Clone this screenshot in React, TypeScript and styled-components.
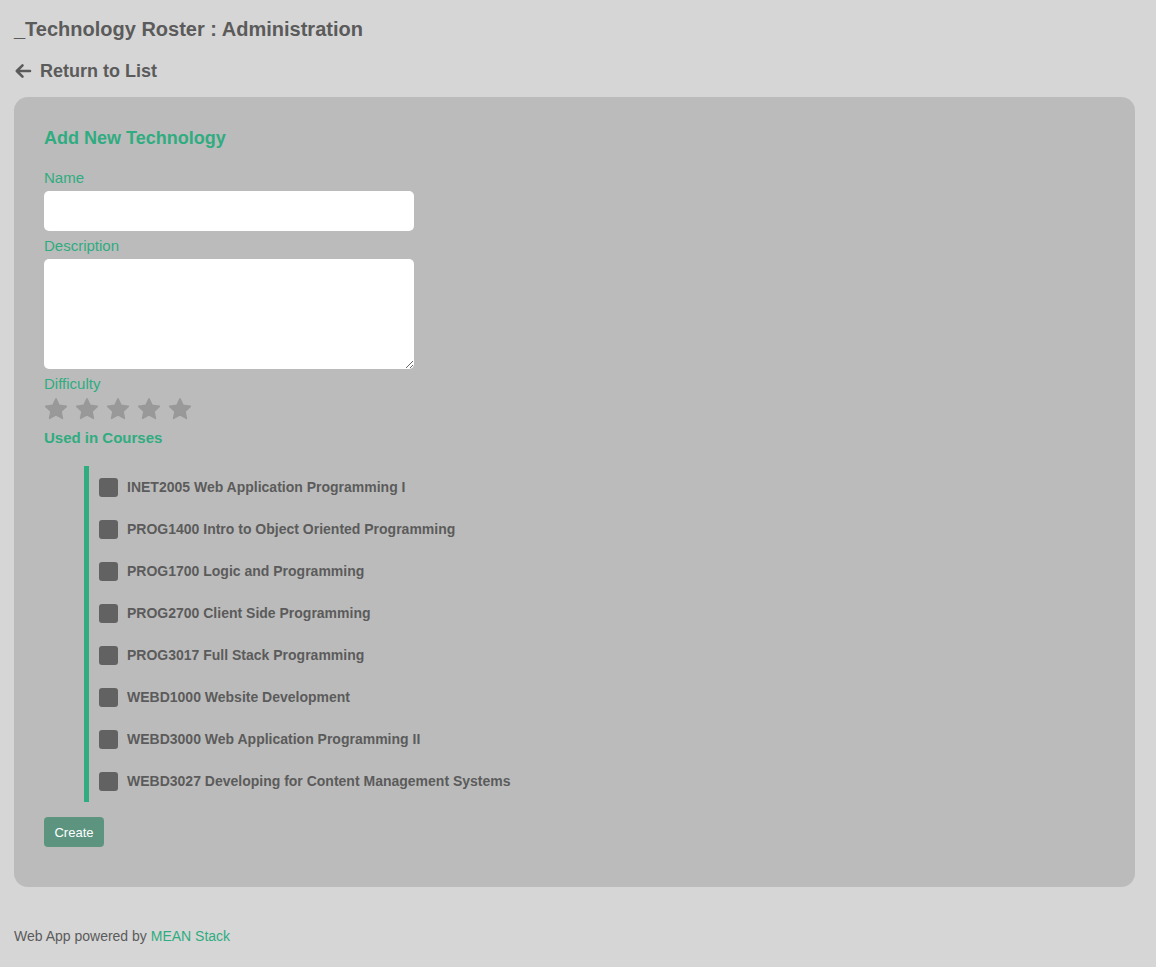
import React from "react";
import styled, { createGlobalStyle } from "styled-components";

const GREEN = "#2fac80";
const TEXT = "#5b5b5b";

const Global = createGlobalStyle`
  html, body { margin: 0; padding: 0; background: #d6d6d6; }
  body { font-family: "Liberation Sans", Arial, sans-serif; color: ${TEXT}; }
  * { box-sizing: border-box; }
`;

const Page = styled.div`
  padding: 17px 21px 0 14px;
  display: flex;
  flex-direction: column;
`;

const Title = styled.h1`
  margin: 0;
  font-size: 20px;
  font-weight: bold;
  line-height: 24px;
  color: ${TEXT};
`;

const BackLink = styled.a`
  display: flex;
  align-items: center;
  gap: 8px;
  margin-top: 19px;
  font-size: 18px;
  font-weight: bold;
  line-height: 22px;
  color: ${TEXT};
  text-decoration: none;
  cursor: pointer;
`;

const Card = styled.div`
  margin-top: 15px;
  background: #bbbbbb;
  border-radius: 14px;
  padding: 30px 30px 40px 30px;
  display: flex;
  flex-direction: column;
  align-items: flex-start;
`;

const Heading = styled.h2`
  margin: 0 0 20px 0;
  font-size: 18px;
  font-weight: bold;
  line-height: 22px;
  color: ${GREEN};
`;

const Label = styled.label<{ $bold?: boolean }>`
  display: block;
  font-size: 15px;
  line-height: 18px;
  font-weight: ${(p) => (p.$bold ? "bold" : "normal")};
  color: ${GREEN};
`;

const TextInput = styled.input`
  display: block;
  width: 370px;
  height: 40px;
  border: none;
  border-radius: 5px;
  background: #fff;
  margin: 4px 0 6px 0;
  outline: none;
`;

const TextArea = styled.textarea`
  display: block;
  width: 370px;
  height: 110px;
  border: none;
  border-radius: 5px;
  background: #fff;
  margin: 4px 0 6px 0;
  outline: none;
  resize: vertical;
`;

const Stars = styled.div`
  display: flex;
  gap: 7px;
  margin: 4px 0 8px 0;
`;

const StarIcon = styled.svg`
  width: 24px;
  height: 24px;
  display: block;
`;

const CourseList = styled.ul`
  list-style: none;
  margin: 19px 0 0 40px;
  padding: 0 0 0 10px;
  border-left: 5px solid ${GREEN};
`;

const CourseItem = styled.li`
  height: 42px;
  display: flex;
  align-items: center;
  gap: 9px;
  font-size: 14px;
  font-weight: bold;
  color: ${TEXT};
`;

const Box = styled.span`
  width: 19px;
  height: 19px;
  border-radius: 3px;
  background: #626262;
  flex: none;
`;

const CreateButton = styled.button`
  margin-top: 15px;
  width: 60px;
  height: 30px;
  padding: 0;
  border: none;
  border-radius: 4px;
  background: #5d9480;
  color: #fff;
  font-family: "Liberation Sans", Arial, sans-serif;
  font-size: 13px;
  cursor: pointer;
`;

const Footer = styled.footer`
  margin-top: 41px;
  font-size: 14px;
  line-height: 16px;
  color: ${TEXT};
`;

const FooterLink = styled.a`
  color: ${GREEN};
  text-decoration: none;
`;

const courses = [
  "INET2005 Web Application Programming I",
  "PROG1400 Intro to Object Oriented Programming",
  "PROG1700 Logic and Programming",
  "PROG2700 Client Side Programming",
  "PROG3017 Full Stack Programming",
  "WEBD1000 Website Development",
  "WEBD3000 Web Application Programming II",
  "WEBD3027 Developing for Content Management Systems",
];

const Star = () => (
  <StarIcon viewBox="0 0 24 24">
    <path
      d="M12 1.8l3.1 6.6 7.2.9-5.3 5 1.4 7.1L12 17.9l-6.4 3.5 1.4-7.1-5.3-5 7.2-.9z"
      fill="#999999"
      stroke="#999999"
      strokeWidth="1.6"
      strokeLinejoin="round"
    />
  </StarIcon>
);

const Arrow = () => (
  <svg width="18" height="16" viewBox="0 0 18 16">
    <path
      d="M16 8H3M8.5 2.3L2.8 8l5.7 5.7"
      fill="none"
      stroke={TEXT}
      strokeWidth="2.6"
      strokeLinecap="round"
      strokeLinejoin="round"
    />
  </svg>
);

export default function App() {
  return (
    <>
      <Global />
      <Page>
        <Title>_Technology Roster : Administration</Title>
        <BackLink>
          <Arrow />
          Return to List
        </BackLink>
        <Card>
          <Heading>Add New Technology</Heading>
          <Label>Name</Label>
          <TextInput type="text" />
          <Label>Description</Label>
          <TextArea />
          <Label>Difficulty</Label>
          <Stars>
            {[0, 1, 2, 3, 4].map((i) => (
              <Star key={i} />
            ))}
          </Stars>
          <Label $bold>Used in Courses</Label>
          <CourseList>
            {courses.map((c) => (
              <CourseItem key={c}>
                <Box />
                {c}
              </CourseItem>
            ))}
          </CourseList>
          <CreateButton>Create</CreateButton>
        </Card>
        <Footer>
          Web App powered by <FooterLink>MEAN Stack</FooterLink>
        </Footer>
      </Page>
    </>
  );
}
